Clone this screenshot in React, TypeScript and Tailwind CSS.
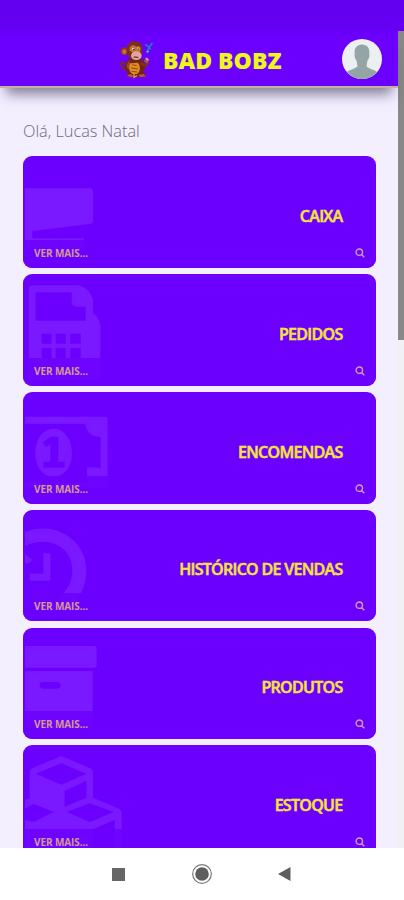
import type { ReactNode } from "react";

type MenuCard = {
  title: string;
  viewBox: string;
  icon: ReactNode;
};

const cards: MenuCard[] = [
  {
    title: "CAIXA",
    viewBox: "40 18 360 336",
    icon: <path d="M46 115H243Q250 115 250 122V212Q250 221 241 222L68 243V265H218Q224 265 224 271V300H46Z" />,
  },
  {
    title: "PEDIDOS",
    viewBox: "40 13 360 336",
    icon: (
      <path
        fillRule="evenodd"
        d="M68 47H208Q244 60 250 92V130Q270 145 272 170V322Q272 332 262 332H68Q58 332 58 322V57Q58 47 68 47ZM78 68V153H228V111H202Q187 111 186 98V68ZM96 192V222H126V192ZM138 192V222H168V192ZM182 192V222H213V192ZM96 235V265H126V235ZM138 235V265H168V235ZM182 235V265H213V235Z"
      />
    ),
  },
  {
    title: "ENCOMENDAS",
    viewBox: "40 13 360 336",
    icon: (
      <>
        <path
          fillRule="evenodd"
          d="M46 87H284Q294 87 294 97V290Q294 300 284 300H46V286H232V240Q256 236 273 242V148Q232 146 227 108H46Z"
        />
        <path
          fillRule="evenodd"
          d="M132 123C166 123 187 157 187 196C187 235 166 267 132 267C98 267 77 235 77 196C77 157 98 123 132 123ZM122 147L99 165L109 178L122 170V222H101V240H165V222H146V147Z"
        />
      </>
    ),
  },
  {
    title: "HISTÓRICO DE VENDAS",
    viewBox: "40 14 360 336",
    icon: (
      <>
        <path d="M46 80C130 45 230 100 230 195C230 250 205 285 178 305L145 278C170 258 188 235 188 195C188 120 110 90 46 122Z" />
        <path d="M46 145L68 164L58 174H46ZM101 144H122V226H60V205H101Z" />
      </>
    ),
  },
  {
    title: "PRODUTOS",
    viewBox: "40 17 360 336",
    icon: (
      <>
        <path d="M46 71H252Q261 71 261 80V127Q261 136 252 136H46Z" />
        <path
          fillRule="evenodd"
          d="M46 146H249V308Q249 318 239 318H46ZM100 179Q90 179 90 189Q90 199 100 199H143Q153 199 153 189Q153 179 143 179Z"
        />
      </>
    ),
  },
  {
    title: "ESTOQUE",
    viewBox: "40 15 360 336",
    icon: (
      <path
        fillRule="evenodd"
        d="M155 48L238 83Q250 88 250 98V173L325 205Q336 210 336 222V330H46V180L60 174V98Q60 88 71 83ZM78 101L155 134L230 101L155 70ZM165 152V200L230 173V123ZM46 206V240L72 246L132 216L72 192ZM172 216L240 246L312 216L240 190ZM250 268V330H315V240Z"
      />
    ),
  },
];

function Monkey() {
  return (
    <svg className="h-10 w-9 shrink-0" viewBox="0 0 108 120" fill="none">
      <path d="M22 76C8 62 6 76 14 84C16 92 28 94 34 98" stroke="#7c2d16" strokeWidth="5" />
      <path d="M38 58C22 66 16 82 23 93L31 99L25 106L34 113H81L85 107L74 100C83 92 86 77 72 60Z" fill="#702419" />
      <path d="M34 65C25 73 23 85 31 91L39 82Z" fill="#a4461f" />
      <path d="M37 73C30 86 34 101 44 105H57C68 98 68 82 60 71Z" fill="#dc8b25" />
      <path d="M43 77L56 80M39 87L60 90M41 97L57 99" stroke="#9b4c19" strokeWidth="3" />
      <ellipse cx="19" cy="37" rx="11" ry="12" fill="#8e351c" />
      <ellipse cx="19" cy="38" rx="6" ry="7" fill="#d16f34" />
      <path d="M28 18C37 7 48 3 56 9C68 8 76 20 72 36C75 52 65 62 51 63C35 61 28 51 27 38Z" fill="#79301a" />
      <path d="M36 24C44 16 50 18 54 23C65 18 70 26 67 37C63 44 38 42 34 34Z" fill="#c27135" />
      <ellipse cx="55" cy="50" rx="16" ry="13" fill="#e6a4a0" />
      <path d="M42 30L49 29M58 29L64 28" stroke="#f6e4b8" strokeWidth="5" />
      <path d="M45 31H50M59 30H63M47 54L61 55" stroke="#421716" strokeWidth="3" />
      <path d="M66 73L84 79L91 67" stroke="#86311b" strokeWidth="8" />
      <path d="M84 54L94 62L88 73L78 68Z" fill="#9d5962" />
      <path d="M84 58L91 64" stroke="#e5aaa1" strokeWidth="4" />
      <path d="M87 43L93 26L103 11M81 16L94 25M88 30L99 29" stroke="#2478ba" strokeWidth="5" />
      <path d="M86 36L92 39" stroke="#70cee7" strokeWidth="4" />
      <path d="M27 108L40 105L48 114H34ZM60 108L77 105L84 112L68 115Z" fill="#b45b26" />
      <path d="M48 105V115L57 110" stroke="#e09a3a" strokeWidth="4" />
    </svg>
  );
}

function Avatar() {
  return (
    <svg className="h-10 w-10" viewBox="0 0 40 40">
      <defs>
        <clipPath id="avatar">
          <circle cx="20" cy="20" r="20" />
        </clipPath>
      </defs>
      <circle cx="20" cy="20" r="20" fill="#ecf0f1" />
      <path
        clipPath="url(#avatar)"
        fill="#95a5a5"
        d="M20 5.5C25.5 5.5 28 9.5 27.3 15C28 18 26.5 20 25.5 21.5L24.5 27.5C27 30 33 30.5 36 34V40H4V34C7 30.5 13 30 15.5 27.5L14.5 21.5C13.2 20 12 18 12.7 15C12 9.5 14.5 5.5 20 5.5Z"
      />
    </svg>
  );
}

function Card({ title, viewBox, icon }: MenuCard) {
  return (
    <div className="relative flex h-[111.7px] shrink-0 flex-col overflow-hidden rounded-[9px] bg-[#6c00ff]">
      <svg className="absolute top-0 left-0 h-28 w-[120px]" viewBox={viewBox} fill="#7a18ff">
        {icon}
      </svg>
      <div className="relative flex flex-1 items-end justify-end pr-[33px] pb-[13px]">
        <h2 className="text-[16px] leading-[22px] font-semibold tracking-[-0.7px] text-[#f6e438] [-webkit-text-stroke:0.5px_#f6e438]">
          {title}
        </h2>
      </div>
      <div className="relative flex h-[28px] items-center justify-between bg-[#6c00ff]/85 pr-[11px] pb-[2px] pl-[11px]">
        <span className="text-[10px] leading-[14px] font-bold tracking-[-0.1px] text-[#d39c90]">VER MAIS...</span>
        <svg className="h-[10px] w-[10px]" viewBox="0 0 10 10" fill="none" stroke="#d49aa5" strokeWidth="1.4">
          <circle cx="4.3" cy="4.2" r="3.2" />
          <path d="M6.7 6.7L9.3 9.3" />
        </svg>
      </div>
    </div>
  );
}

export default function App() {
  return (
    <div className="flex h-[900px] w-[404px] flex-col overflow-hidden bg-[#f3efff] font-['Open_Sans',sans-serif]">
      <div className="h-[31px] shrink-0 bg-linear-to-b from-[#6400ef] to-[#6500f4]" />

      <div className="flex min-h-0 flex-1">
        <div className="flex w-[398px] flex-col">
          <header className="relative flex h-[57px] shrink-0 items-center border-b-2 border-[#c2b29b] bg-linear-to-b from-[#6900fa] to-[#6c00ff] to-20% pr-4 pl-[118px] shadow-[0_12px_12px_-6px_rgba(40,30,65,0.55)]">
            <Monkey />
            <h1 className="ml-[9px] pt-[2px] text-[23px] leading-7 font-extrabold whitespace-nowrap text-[#ecf71a]">
              BAD BOBZ
            </h1>
            <div className="ml-auto">
              <Avatar />
            </div>
          </header>

          <main className="flex min-h-0 flex-1 flex-col overflow-hidden pr-[22.5px] pl-[23px]">
            <p className="mt-[32px] mb-[14.4px] h-[22px] shrink-0 text-[16.3px] leading-[22px] font-light text-[#6f6b7b]">
              Olá, Lucas Natal
            </p>
            <div className="flex flex-col gap-[6.1px]">
              {cards.map((card) => (
                <Card key={card.title} {...card} />
              ))}
            </div>
          </main>
        </div>

        <div className="w-[6px] bg-[#f1f0f4]">
          <div className="h-[309px] bg-[#888888]" />
        </div>
      </div>

      <nav className="flex h-[52px] shrink-0 items-center bg-white pl-[112px]">
        <div className="h-[13px] w-[13px] bg-[#666666]" />
        <svg className="ml-[67px] h-5 w-5" viewBox="0 0 20 20">
          <circle cx="10" cy="10" r="9.3" fill="none" stroke="#777777" strokeWidth="1.2" />
          <circle cx="10" cy="10" r="6.8" fill="#5e5e5e" />
        </svg>
        <svg className="ml-[66px] h-[14px] w-[13px]" viewBox="0 0 13 14">
          <path d="M0 7L12.5 0V14Z" fill="#5e5e5e" />
        </svg>
      </nav>
    </div>
  );
}
